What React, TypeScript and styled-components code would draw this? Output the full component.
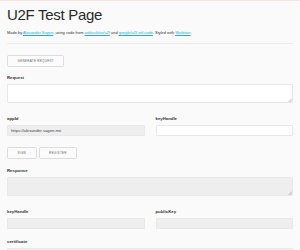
import React from 'react';
import styled, { createGlobalStyle } from 'styled-components';

const GlobalStyle = createGlobalStyle`
  html, body {
    margin: 0;
    padding: 0;
    background: #fafafa;
  }
  body {
    font-family: "Liberation Sans", Arial, sans-serif;
    color: #222;
    border-top: 1px solid #f6e3e3;
  }
`;

const Grip = () => (
  <GripMark width="4" height="4" viewBox="0 0 4 4">
    <path d="M4 0.5 L0.5 4 M4 2.3 L2.3 4" stroke="#9a9a9a" strokeWidth="0.6" />
  </GripMark>
);

const Area = ({ disabled }: { disabled?: boolean }) => (
  <AreaWrap>
    <TextArea disabled={disabled} />
    <Grip />
  </AreaWrap>
);

const App = () => {
  return (
    <>
      <GlobalStyle />
      <Container>
        <Title>U2F Test Page</Title>
        <Intro>
          Made by <Link href="#">Alexander Sagen</Link>, using code from{' '}
          <Link href="#">ashtuchkin/u2f</Link> and <Link href="#">google/u2f-ref-code</Link>.
          Styled with <Link href="#">Skeleton</Link>.
        </Intro>
        <Rule />

        <ButtonRow $mt={11}>
          <Button>Generate request</Button>
        </ButtonRow>

        <Field $mt={8}>
          <Label>Request</Label>
          <Area />
        </Field>

        <Row $mt={13}>
          <Field>
            <Label>appId</Label>
            <Input disabled defaultValue="https://alexander.sagen.me" />
          </Field>
          <Field>
            <Label>keyHandle</Label>
            <Input />
          </Field>
        </Row>

        <ButtonRow $mt={11}>
          <Button>Sign</Button>
          <Button>Register</Button>
        </ButtonRow>

        <Field $mt={9}>
          <Label>Response</Label>
          <Area disabled />
        </Field>

        <Row $mt={13}>
          <Field>
            <Label>keyHandle</Label>
            <Input disabled />
          </Field>
          <Field>
            <Label>publicKey</Label>
            <Input disabled />
          </Field>
        </Row>

        <Field $mt={10}>
          <Label>certificate</Label>
          <Input disabled />
        </Field>
      </Container>
    </>
  );
};

export default App;

const Container = styled.div`
  width: 286px;
  margin: 0 7px;
`;

const Title = styled.h1`
  margin: 5px 0 0;
  font-size: 15px;
  line-height: 18px;
  font-weight: 400;
  letter-spacing: -0.3px;
  color: #2a2a2a;
`;

const Intro = styled.p`
  margin: 6px 0 0;
  font-size: 3.95px;
  line-height: 6px;
  color: #333;
`;

const Link = styled.a`
  color: #1eaedb;
  text-decoration: underline;
`;

const Rule = styled.hr`
  margin: 7px 0 0;
  border: 0;
  border-top: 1px solid #ececec;
`;

const ButtonRow = styled.div<{ $mt: number }>`
  display: flex;
  gap: 2px;
  margin-top: ${(p) => p.$mt}px;
`;

const Button = styled.button`
  height: 12px;
  padding: 0 9.5px;
  border: 1px solid #dcdcdc;
  border-radius: 1.5px;
  background: #fbfbfb;
  color: #666;
  font-family: "Liberation Sans", Arial, sans-serif;
  font-size: 3px;
  font-weight: 400;
  letter-spacing: 0.3px;
  text-transform: uppercase;
  line-height: 10px;
`;

const Row = styled.div<{ $mt: number }>`
  display: grid;
  grid-template-columns: 1fr 1fr;
  column-gap: 11px;
  margin-top: ${(p) => p.$mt}px;
`;

const Field = styled.div<{ $mt?: number }>`
  display: flex;
  flex-direction: column;
  margin-top: ${(p) => p.$mt ?? 0}px;
`;

const Label = styled.label`
  display: block;
  margin-bottom: 3px;
  font-size: 4.3px;
  line-height: 6px;
  font-weight: 700;
  color: #333;
`;

const Input = styled.input`
  box-sizing: border-box;
  width: 100%;
  height: 11px;
  margin: 0;
  padding: 0 3px;
  border: 1px solid #e8e8e8;
  border-radius: 1px;
  background: #fff;
  color: #444;
  font-family: "Liberation Sans", Arial, sans-serif;
  font-size: 4.2px;

  &:disabled {
    background: #eee;
    color: #444;
  }
`;

const AreaWrap = styled.div`
  position: relative;
`;

const TextArea = styled.textarea`
  display: block;
  box-sizing: border-box;
  width: 100%;
  height: 19px;
  margin: 0;
  padding: 2px 3px;
  border: 1px solid #e8e8e8;
  border-radius: 1px;
  background: #fff;
  font-family: "Liberation Sans", Arial, sans-serif;
  font-size: 4.2px;
  resize: none;

  &:disabled {
    background: #eee;
  }
`;

const GripMark = styled.svg`
  position: absolute;
  right: 1px;
  bottom: 1px;
  display: block;
`;
